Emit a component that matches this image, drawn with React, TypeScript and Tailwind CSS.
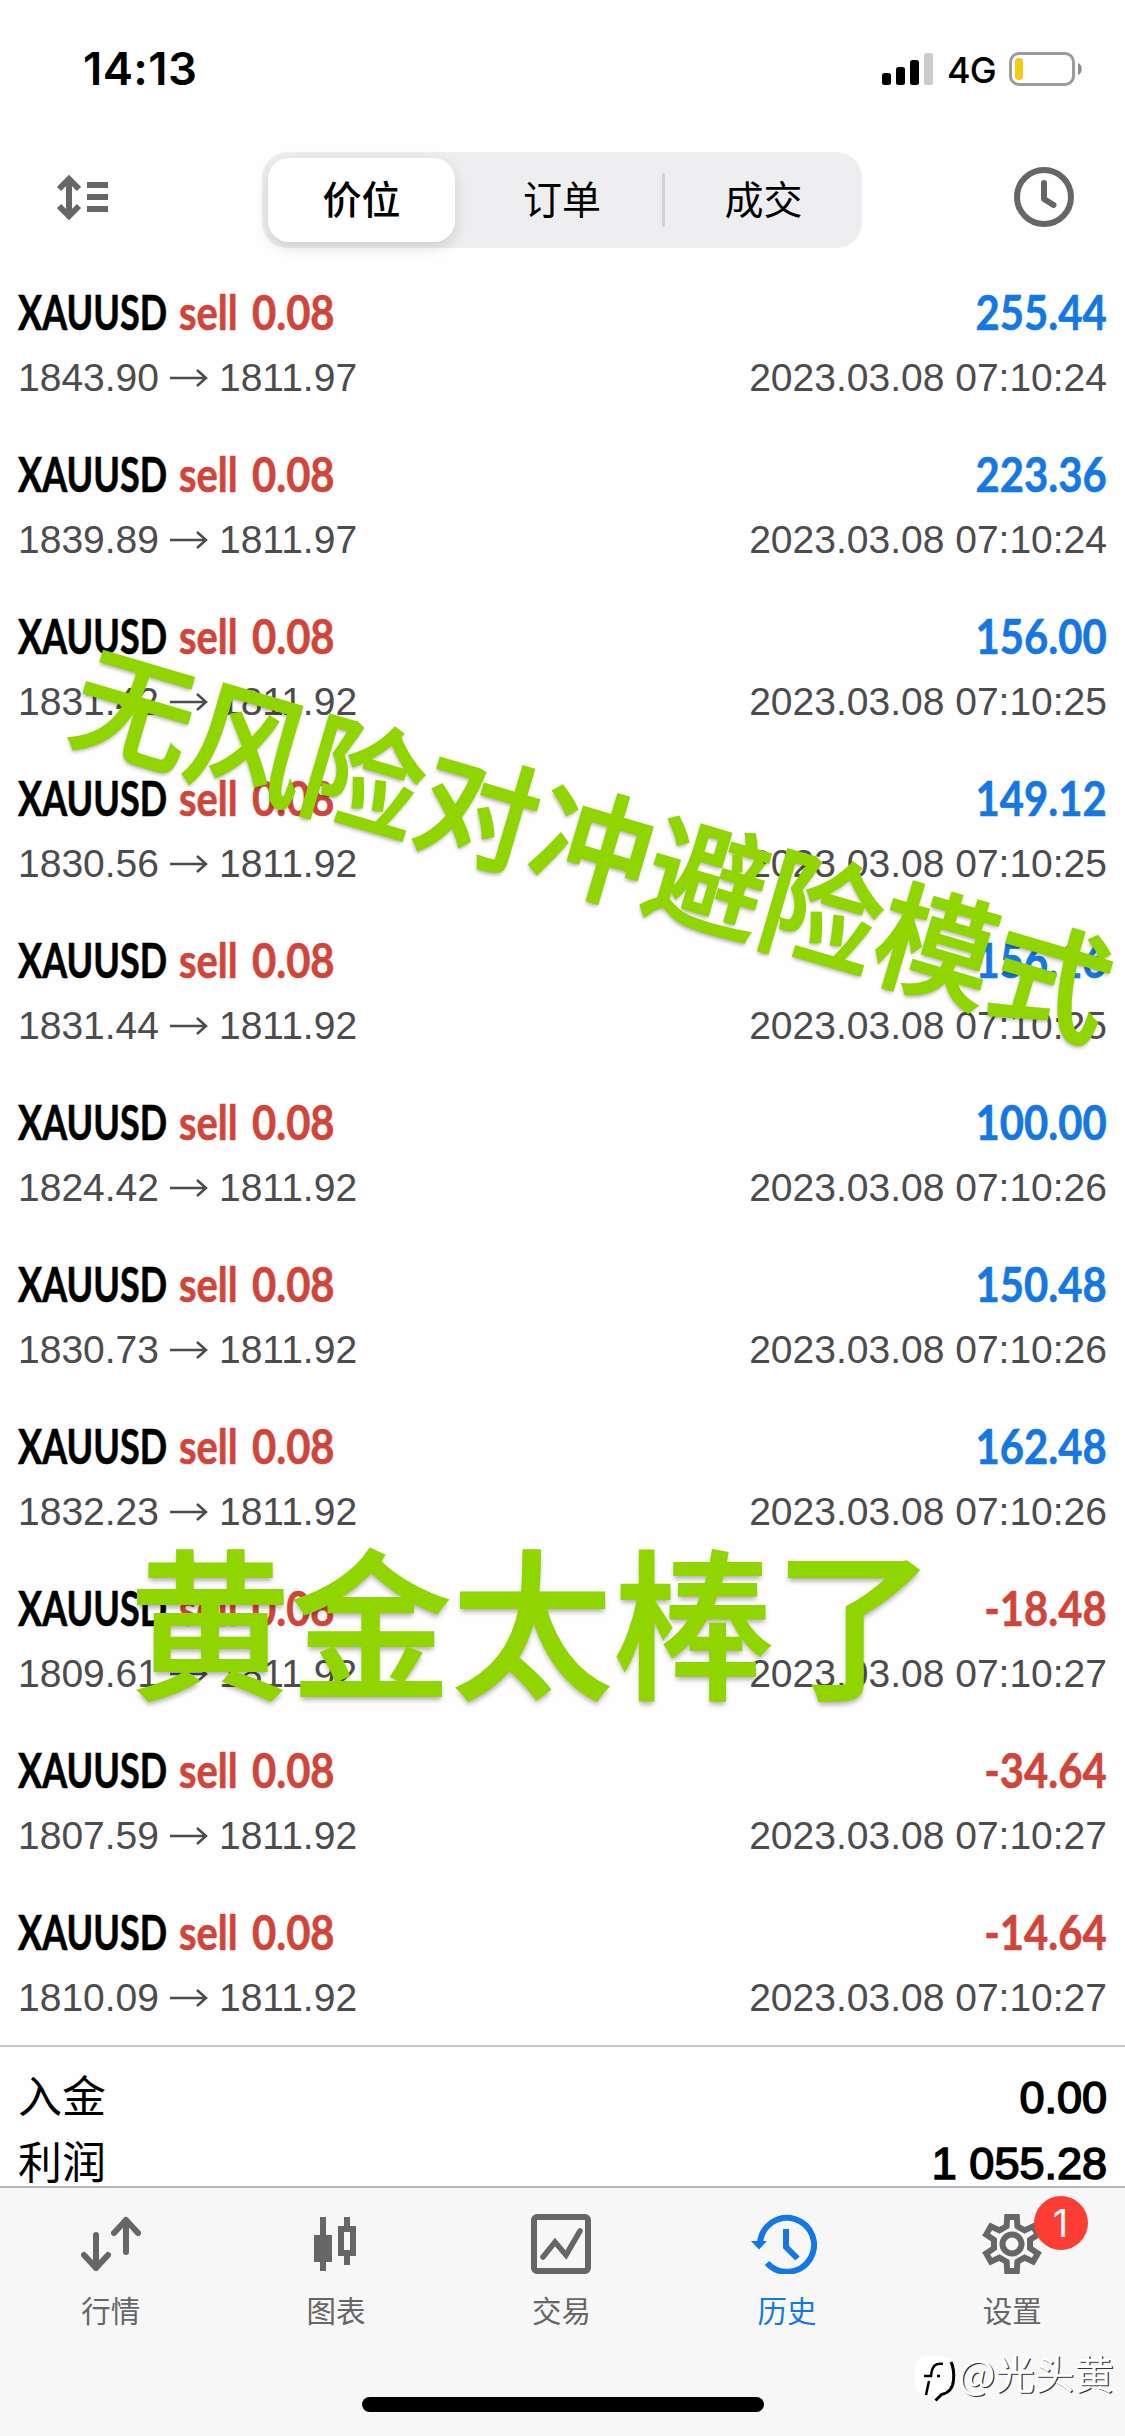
type Deal = {
  open: string;
  close: string;
  time: string;
  profit: string;
};

const DEALS: Deal[] = [
  { open: "1843.90", close: "1811.97", time: "07:10:24", profit: "255.44" },
  { open: "1839.89", close: "1811.97", time: "07:10:24", profit: "223.36" },
  { open: "1831.42", close: "1811.92", time: "07:10:25", profit: "156.00" },
  { open: "1830.56", close: "1811.92", time: "07:10:25", profit: "149.12" },
  { open: "1831.44", close: "1811.92", time: "07:10:25", profit: "156.16" },
  { open: "1824.42", close: "1811.92", time: "07:10:26", profit: "100.00" },
  { open: "1830.73", close: "1811.92", time: "07:10:26", profit: "150.48" },
  { open: "1832.23", close: "1811.92", time: "07:10:26", profit: "162.48" },
  { open: "1809.61", close: "1811.92", time: "07:10:27", profit: "-18.48" },
  { open: "1807.59", close: "1811.92", time: "07:10:27", profit: "-34.64" },
  { open: "1810.09", close: "1811.92", time: "07:10:27", profit: "-14.64" },
];

const polar = (r: number, deg: number) => {
  const a = ((deg - 90) * Math.PI) / 180;
  return `${(30 + r * Math.cos(a)).toFixed(2)},${(30 + r * Math.sin(a)).toFixed(2)}`;
};

// outline of the six-tooth cog
const COG = Array.from({ length: 6 })
  .map((_, i) => {
    const d = i * 60;
    return [polar(18.5, d - 17), polar(27.5, d - 10), polar(27.5, d + 10), polar(18.5, d + 17)].join(" ");
  })
  .join(" ");

function StatusBar() {
  return (
    <header className="flex h-[138px] items-center justify-between pl-[83px] pr-[42px] font-['Inter']">
      <span className="text-[45.500px] font-semibold leading-none tracking-[0.4px]">14:13</span>
      <div className="flex items-center">
        <svg width="52" height="34" viewBox="0 0 52 34">
          <rect x="0" y="21" width="9" height="12" rx="2.5" />
          <rect x="14" y="15" width="9" height="18" rx="2.5" />
          <rect x="28" y="8" width="9" height="25" rx="2.5" />
          <rect x="42" y="1" width="9" height="32" rx="2.5" fill="#cccccc" />
        </svg>
        <span className="ml-[13px] w-[62px] pt-[2px] text-[36px] font-medium leading-none tracking-[-1px]">4G</span>
        <svg width="74" height="34" viewBox="0 0 74 34">
          <rect x="1.5" y="1.5" width="63" height="31" rx="8.5" fill="none" stroke="#9b9b9b" strokeWidth="3" />
          <rect x="6" y="6" width="8" height="22" rx="3.5" fill="#f6c915" />
          <path d="M69 11c5 1.500 5 10.500 0 12z" fill="#8c8c8c" />
        </svg>
      </div>
    </header>
  );
}

function Toolbar() {
  return (
    <div className="flex h-[125px] items-start justify-between pl-[57px] pr-[51px] pt-[14px]">
      <svg className="mt-[22px]" width="52" height="47" viewBox="0 0 52 47" fill="none" stroke="#666666" strokeWidth="6">
        <path d="M12 4v39M2 15 12 5l10 10M2 32l10 10 10-10" />
        <path d="M30 11h21M30 23h21M30 35h21" />
      </svg>
      <div className="ml-px flex h-[96px] w-[600px] items-center rounded-[26px] bg-[#eeeef0] p-[6px] text-[39px] leading-none">
        <div className="flex h-[84px] w-[187px] items-center justify-center rounded-[21px] bg-white pb-[5px] font-medium shadow-[0_5px_14px_rgba(0,0,0,0.14)]">
          价位
        </div>
        <div className="flex w-[207px] items-center justify-center pb-[5px] pl-[7px]">订单</div>
        <div className="h-[54px] w-[3px] rounded bg-[#d2d2d4]" />
        <div className="flex flex-1 items-center justify-center pb-[5px] pl-[6px]">成交</div>
      </div>
      <svg className="mt-[15px]" width="60" height="60" viewBox="0 0 60 60" fill="none" stroke="#666666" strokeWidth="6">
        <circle cx="30" cy="30" r="27" />
        <path d="M30 16v16l9.500 6" strokeLinecap="round" strokeLinejoin="round" />
      </svg>
    </div>
  );
}

function DealRow({ open, close, time, profit }: Deal) {
  const loss = profit.startsWith("-");

  return (
    <li className="h-[162px] pl-[18px] pr-[18px] pt-[20px]">
      <div className="flex h-[58px] items-center justify-between whitespace-nowrap font-['Lato'] text-[48px] font-bold leading-[58px]">
        <div className="flex [-webkit-text-stroke:0.600px_currentColor]">
          <span className="w-[161px] origin-left scale-x-[0.75]">XAUUSD</span>
          <span className="w-[73px] origin-left scale-x-[0.83] text-[#d0453a]">sell</span>
          <span className="origin-left scale-x-[0.87] text-[#d0453a]">0.08</span>
        </div>
        <span
          className={`origin-right scale-x-[0.87] [-webkit-text-stroke:0.600px_currentColor] ${loss ? "text-[#d0453a]" : "text-[#1477e4]"}`}
        >
          {profit}
        </span>
      </div>
      <div className="mt-[12px] flex h-[50px] items-center justify-between whitespace-nowrap font-['Liberation_Sans'] text-[39px] leading-[50px] text-[#4c4c4e]">
        <div className="flex items-center">
          <span>{open}</span>
          <svg className="mx-[11px]" width="38" height="18" viewBox="0 0 38 18" fill="none" stroke="currentColor" strokeWidth="2.500">
            <path d="M0 9h36M27 1l9 8-9 8" />
          </svg>
          <span>{close}</span>
        </div>
        <span>2023.03.08 {time}</span>
      </div>
    </li>
  );
}

function Summary() {
  return (
    <section className="h-[141px] border-t-2 border-[#c8c8ca] px-[18px] pt-[18px]">
      {[
        ["入金", "0.00"],
        ["利润", "1 055.28"],
      ].map(([label, value]) => (
        <div key={label} className="flex h-[66px] items-center justify-between text-[44px] leading-none">
          <span className="pb-[8px]">{label}</span>
          <span className="pb-[2px] font-['Liberation_Sans'] text-[45px] [-webkit-text-stroke:1.600px_#000]">{value}</span>
        </div>
      ))}
    </section>
  );
}

function TabBar() {
  return (
    <nav className="relative h-[250px] border-t-2 border-[#b6b6b8] bg-[#f7f7f7] text-[29.500px] leading-none text-[#666666]">
      <div className="-ml-[2px] grid grid-cols-5 pt-[26px]">
        <div className="flex flex-col items-center gap-[21px]">
          <svg width="60" height="60" viewBox="0 0 60 60" fill="none" stroke="#666666" strokeWidth="6" strokeLinecap="round" strokeLinejoin="round">
            <path d="M15 21v33M3 41l12 13 12-13" />
            <path d="M45 38V6M33 19 45 6l12 13" />
          </svg>
          <span>行情</span>
        </div>
        <div className="flex flex-col items-center gap-[21px]">
          <svg width="60" height="60" viewBox="0 0 60 60" fill="#666666">
            <path d="M14 3h6v18h6v27h-6v9h-6v-9H8V21h6z" />
            <path fillRule="evenodd" d="M38 3h6v9h6v30h-6v9h-6v-9h-6V12h6zM38 18v18h6V18z" />
          </svg>
          <span>图表</span>
        </div>
        <div className="flex flex-col items-center gap-[21px]">
          <svg width="60" height="60" viewBox="0 0 60 60" fill="none" stroke="#666666" strokeWidth="6">
            <rect x="3" y="3" width="54" height="54" rx="3" />
            <path d="M12 43l12-15 11 13 14-24" strokeWidth="5.500" strokeLinecap="round" />
          </svg>
          <span>交易</span>
        </div>
        <div className="flex flex-col items-center gap-[21px] text-[#1477e4]">
          <svg className="-ml-[5px]" width="66" height="60" viewBox="0 0 66 60" fill="none" stroke="currentColor" strokeWidth="6">
            <path d="M9 30A27 27 0 1 1 16 49" />
            <path d="M35 15v18l11.500 11.500" />
            <path d="M0 27h16l-8 8.500z" fill="currentColor" stroke="none" />
          </svg>
          <span>历史</span>
        </div>
        <div className="relative flex flex-col items-center gap-[21px]">
          <svg width="60" height="60" viewBox="0 0 60 60" fill="none" stroke="#666666" strokeWidth="6">
            <polygon points={COG} />
            <circle cx="30" cy="30" r="9.500" />
          </svg>
          <span>设置</span>
          <span className="absolute left-[134px] top-[-18px] flex size-[54px] items-center justify-center rounded-full bg-[#fc3d34] font-['Inter'] text-[38px] text-white">
            1
          </span>
        </div>
      </div>

      <div className="absolute left-[362px] top-[209px] h-[15px] w-[402px] rounded-full bg-black" />

      <div className="absolute left-[915px] top-[161px] flex items-center text-[39.500px] text-white">
        <svg className="mt-[6px]" width="44" height="48" viewBox="0 0 44 48">
          <path d="M12 1h14c8 0 12 6 12 14v14c0 8-6 11-13 12l-4 4-3-4h-6C5 41 0 36 0 28V14C0 6 5 1 12 1z" fill="#fff" />
          <path d="M28 9c-7-1-11 1-12 12H9M22 21h3M14 26l-3 14" fill="none" stroke="#000" strokeWidth="2.500" />
          <path d="M36 7c3 6 3 12 2.500 18-.5 8-5 13-12 14.500l-6 6" fill="none" stroke="#000" strokeWidth="3" />
        </svg>
        <span className="-ml-px -mt-[8px] whitespace-nowrap [text-shadow:1.200px_1.200px_0.500px_#333]">@光头黄</span>
      </div>
    </nav>
  );
}

export default function App() {
  return (
    <div className="relative h-[2436px] w-[1125px] overflow-hidden bg-[#fefefe] font-['Noto_Sans_CJK_SC',sans-serif] text-black">
      <StatusBar />
      <Toolbar />
      <ul>
        {DEALS.map((deal, i) => (
          <DealRow key={i} {...deal} />
        ))}
      </ul>
      <Summary />
      <TabBar />

      {/* captions laid over the list */}
      <div className="absolute left-[595px] top-[838px] -translate-x-1/2 -translate-y-1/2 rotate-[16.400deg] whitespace-nowrap text-[119.400px] font-medium leading-none text-[#90d400] [-webkit-text-stroke:2px_#90d400] [text-shadow:0_3px_4px_rgba(0,0,0,0.3)]">
        无风险对冲避险模式
      </div>
      <div className="absolute left-[532px] top-[1616px] -translate-x-1/2 -translate-y-1/2 whitespace-nowrap text-[161px] font-medium leading-none text-[#90d400] [-webkit-text-stroke:2px_#90d400] [text-shadow:0_4px_5px_rgba(0,0,0,0.3)]">
        黄金太棒了
      </div>
    </div>
  );
}
